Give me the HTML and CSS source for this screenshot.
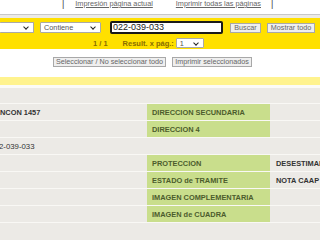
FILE: index.html
```html
<!DOCTYPE html>
<html>
<head>
<meta charset="utf-8">
<link rel="stylesheet" href="styles.css">
</head>
<body>
<div class="top">
  <span class="sep">|</span>
  <a class="plink l1" href="#">Impresión página actual</a>
  <a class="plink l2" href="#">Imprimir todas las páginas</a>
  <span class="sep">|</span>
</div>
<div class="search">
  <div class="srow r1">
    <span class="sel sel1"><span class="chev"></span></span>
    <span class="sel sel2"><span class="stxt">Contiene</span><span class="chev"></span></span>
    <span class="inp">022-039-033</span>
    <span class="btn b-buscar">Buscar</span>
    <span class="btn b-mostrar">Mostrar todo</span>
  </div>
  <div class="srow r2">
    <span class="pg">1 / 1</span>
    <span class="res">Result. x pág.:</span>
    <span class="sel sel3"><span class="stxt">1</span><span class="chev"></span></span>
  </div>
</div>
<div class="actions">
  <span class="btn b-sel">Seleccionar / No seleccionar todo</span>
  <span class="btn b-imp">Imprimir seleccionados</span>
</div>
<div class="band"></div>
<div class="table">
  <div class="row"><div class="c left"></div><div class="c mid blank"></div><div class="c right"></div></div>
  <div class="row"><div class="c left b">NCON 1457</div><div class="c mid">DIRECCION SECUNDARIA</div><div class="c right"></div></div>
  <div class="row"><div class="c left"></div><div class="c mid">DIRECCION 4</div><div class="c right"></div></div>
  <div class="row"><div class="c left num">2-039-033</div><div class="c mid blank"></div><div class="c right"></div></div>
  <div class="row"><div class="c left"></div><div class="c mid">PROTECCION</div><div class="c right b">DESESTIMADO</div></div>
  <div class="row"><div class="c left"></div><div class="c mid">ESTADO de TRAMITE</div><div class="c right b">NOTA CAAP</div></div>
  <div class="row"><div class="c left"></div><div class="c mid">IMAGEN COMPLEMENTARIA</div><div class="c right"></div></div>
  <div class="row"><div class="c left"></div><div class="c mid">IMAGEN de CUADRA</div><div class="c right"></div></div>
</div>
</body>
</html>
```
FILE: styles.css
```css
html, body {
  margin: 0;
  padding: 0;
  background: #eceae6;
  overflow: hidden;
}
body {
  width: 320px;
  height: 240px;
  font-family: "Liberation Sans", Arial, sans-serif;
  font-size: 8px;
  color: #333;
}
.top {
  background: #fff;
  height: 15px;
  border-bottom: 1px solid #c8c8c8;
  display: flex;
  align-items: flex-start;
  padding-left: 62px;
  box-sizing: border-box;
  white-space: nowrap;
}
.sep {
  color: #444;
  font-size: 9px;
  line-height: 9px;
  margin-top: 0;
}
.plink {
  color: #666;
  font-size: 7.3px;
  line-height: 9px;
  margin-top: -1px;
  text-decoration: underline;
}
.l1 { margin-left: 11px; }
.l2 { margin-left: 23px; }
.top .sep:last-child { margin-left: 10px; }

.search {
  margin-top: 3px;
  background: #ffe000;
  height: 31px;
  padding-top: 3px;
  box-sizing: border-box;
}
.srow {
  display: flex;
  align-items: center;
  white-space: nowrap;
}
.r1 { height: 13px; }
.r2 { height: 10px; margin-top: 4px; }
.sel {
  position: relative;
  background: #fff;
  border: 1px solid #a9a9a9;
  height: 11px;
  box-sizing: border-box;
  display: flex;
  align-items: center;
  border-radius: 1px;
}
.sel1 { width: 34px; border-left: none; margin-left: 0; }
.sel2 { width: 61px; margin-left: 6px; }
.stxt {
  color: #555;
  font-size: 7.3px;
  padding-left: 3px;
  line-height: 9px;
}
.chev {
  position: absolute;
  right: 5px;
  top: 2px;
  width: 3px;
  height: 3px;
  border-right: 1.2px solid #222;
  border-bottom: 1.2px solid #222;
  transform: rotate(45deg);
}
.inp {
  margin-left: 9px;
  width: 113px;
  height: 13px;
  box-sizing: border-box;
  border: 2px solid #1a1a1a;
  border-radius: 2px;
  background: #fff;
  color: #222;
  font-size: 9px;
  line-height: 9px;
  padding-left: 1px;
  display: flex;
  align-items: center;
}
.btn {
  display: inline-flex;
  align-items: center;
  justify-content: center;
  height: 10px;
  box-sizing: border-box;
  background: #efefef;
  border: 1px solid #a8a8a8;
  color: #666;
  font-size: 7.2px;
  line-height: 8px;
}
.b-buscar { margin-left: 7px; width: 31px; }
.b-mostrar { margin-left: 6px; width: 48px; }
.pg {
  margin-left: 93px;
  color: #8a6d00;
  font-weight: bold;
  font-size: 7.5px;
}
.res {
  margin-left: 15px;
  color: #8a6d00;
  font-weight: bold;
  font-size: 7.5px;
}
.sel3 { width: 28px; height: 10px; margin-left: 2px; }

.actions {
  background: #fff;
  height: 28px;
  display: flex;
  align-items: flex-start;
  padding-top: 8px;
  box-sizing: border-box;
  padding-left: 53px;
}
.b-sel { width: 113px; }
.b-imp { width: 80px; margin-left: 6px; }
.band {
  height: 8px;
  background: #fff38e;
  border-bottom: 3px solid #fbfbf7;
}
.table {
  background: #eceae6;
}
.row {
  display: flex;
  height: 17px;
  border-bottom: 1px solid #f9f8f5;
  box-sizing: border-box;
}
.row:first-child { height: 16px; }
.c {
  display: flex;
  align-items: center;
  padding-top: 1px;
  box-sizing: border-box;
  font-size: 7.4px;
  white-space: nowrap;
  overflow: hidden;
}
.left { width: 146px; color: #333; }
.left.b { font-weight: bold; padding-left: 0; }
.left.num { font-weight: normal; margin-left: -1px; color: #333; font-size: 7.8px; }
.mid {
  margin-left: 1px;
  width: 123px;
  background: #c9de8c;
  color: #4c5c2c;
  font-weight: bold;
  padding-left: 5px;
}
.mid.blank { background: transparent; }
.right {
  flex: 1;
  padding-left: 6px;
  color: #333;
}
.right.b { font-weight: bold; }
```
